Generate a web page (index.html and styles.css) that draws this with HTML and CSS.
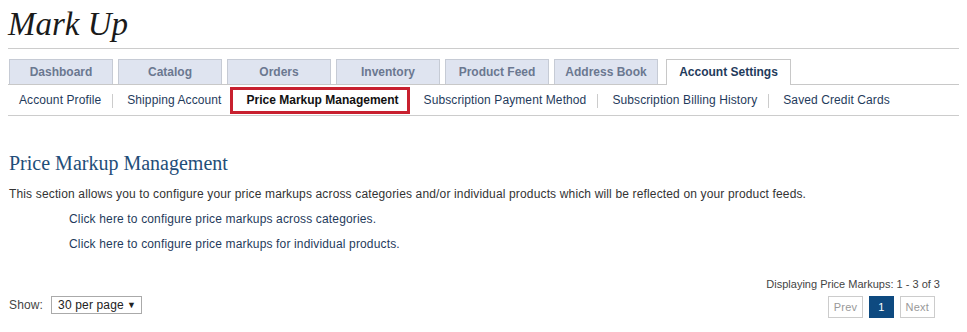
FILE: index.html
```html
<!DOCTYPE html>
<html lang="en">
<head>
  <meta charset="UTF-8">
  <title>Mark Up</title>
  <link rel="stylesheet" href="styles.css">
</head>
<body>

<div class="page">
  <div class="header">
    <h1>Mark Up</h1>
  </div>

  <ul class="tabs">
    <li><a href="#">Dashboard</a></li>
    <li><a href="#">Catalog</a></li>
    <li><a href="#">Orders</a></li>
    <li><a href="#">Inventory</a></li>
    <li><a href="#">Product Feed</a></li>
    <li><a href="#">Address Book</a></li>
    <li class="active"><a href="#">Account Settings</a></li>
  </ul>

  <ul class="subnav">
    <li><a href="#">Account Profile</a></li>
    <li><a href="#">Shipping Account</a></li>
    <li class="active"><a href="#">Price Markup Management</a></li>
    <li><a href="#">Subscription Payment Method</a></li>
    <li><a href="#">Subscription Billing History</a></li>
    <li><a href="#">Saved Credit Cards</a></li>
  </ul>

  <div class="content">
    <h2>Price Markup Management</h2>
    <p class="intro">This section allows you to configure your price markups across categories and/or individual products which will be reflected on your product feeds.</p>
    <ul class="links">
      <li><a href="#">Click here to configure price markups across categories.</a></li>
      <li><a href="#">Click here to configure price markups for individual products.</a></li>
    </ul>
  </div>

  <div class="list-footer">
    <div class="show">
      <span>Show:</span>
      <div class="select">30 per page <span class="arrow">&#9660;</span></div>
    </div>
    <div class="paging">
      <div class="count">Displaying Price Markups: 1 - 3 of 3</div>
      <div class="pager">
        <a href="#" class="disabled">Prev</a>
        <a href="#" class="current">1</a>
        <a href="#" class="disabled">Next</a>
      </div>
    </div>
  </div>
</div>

</body>
</html>
```

FILE: styles.css
```css
* {
  margin: 0;
  padding: 0;
  box-sizing: border-box;
}

body {
  font-family: 'Liberation Sans', Arial, sans-serif;
  font-size: 12px;
  letter-spacing: 0.15px;
  color: #333;
  background: #fff;
}

a {
  text-decoration: none;
}

ul {
  list-style: none;
}

.page {
  padding: 0 8px;
}

.header {
  height: 49px;
  border-bottom: 1px solid #ccc;
}

.header h1 {
  font-family: 'Liberation Serif', 'Times New Roman', serif;
  font-style: italic;
  font-weight: normal;
  font-size: 33px;
  letter-spacing: 0;
  line-height: 40px;
  padding-top: 4px;
  color: #1a1a1a;
}

/* main tabs */
.tabs {
  display: flex;
  gap: 5px;
  margin-top: 10px;
  padding-left: 1px;
  border-bottom: 1px solid #c8c8c8;
}

.tabs li a {
  display: block;
  width: 104px;
  height: 25px;
  line-height: 24px;
  text-align: center;
  font-weight: bold;
  letter-spacing: 0;
  color: #6b7890;
  background: #dfe4f0;
  border: 1px solid #c6cbd5;
  border-bottom: none;
}

.tabs li.active {
  margin-left: 3px;
  margin-bottom: -1px;
}

.tabs li.active a {
  width: 125px;
  height: 26px;
  background: #fff;
  color: #1f3b5c;
  border-color: #c8c8c8;
}

/* sub navigation */
.subnav {
  display: flex;
  align-items: center;
  padding: 2px 0 1px;
  border-bottom: 1px solid #ccc;
  letter-spacing: 0.1px;
}

.subnav li {
  display: flex;
  align-items: center;
}

.subnav li:not(.active) + li:not(.active)::before {
  content: "";
  width: 1px;
  height: 14px;
  background: #ccc;
}

.subnav li a {
  display: block;
  line-height: 21px;
  padding: 3px 11px 3px 14px;
  color: #1f3b5c;
}

.subnav li:first-child a {
  padding-left: 11px;
}

.subnav li.active {
  margin-left: -3px;
}

.subnav li.active a {
  font-weight: bold;
  letter-spacing: 0;
  color: #111;
  border: 3px solid #c8202f;
  padding: 0 8px 0 14px;
}

/* content */
.content {
  padding-left: 1px;
}

.content h2 {
  font-family: 'Liberation Serif', Georgia, serif;
  font-weight: normal;
  font-size: 20px;
  letter-spacing: 0;
  color: #1f4e79;
  margin-top: 35px;
  line-height: 24px;
}

.intro {
  margin-top: 11px;
  line-height: 16px;
}

.links {
  padding-left: 60px;
}

.links li {
  margin-top: 9px;
  line-height: 16px;
}

.links a {
  color: #1f3b5c;
}

/* list footer */
.list-footer {
  display: flex;
  justify-content: space-between;
  align-items: flex-end;
  margin-top: 25px;
  padding-right: 19px;
}

.show {
  display: flex;
  align-items: center;
  gap: 8px;
  padding-left: 1px;
  margin-bottom: 4px;
  color: #444;
}

.select {
  display: flex;
  justify-content: space-between;
  align-items: center;
  width: 91px;
  height: 18px;
  padding: 0 5px 0 6px;
  border: 1px solid #aaa;
  color: #222;
  font-size: 12px;
}

.select .arrow {
  font-size: 9px;
}

.paging {
  display: flex;
  flex-direction: column;
  align-items: flex-end;
}

.count {
  font-size: 11px;
  letter-spacing: 0;
  color: #444;
  line-height: 14px;
}

.pager {
  display: flex;
  gap: 6px;
  margin-top: 5px;
  margin-right: 5px;
}

.pager a {
  display: block;
  height: 22px;
  line-height: 20px;
  padding: 0 5px;
  font-size: 11px;
  letter-spacing: 0.2px;
  border: 1px solid #ccc;
  color: #999;
}

.pager a.current {
  background: #0e4a80;
  border-color: #0e4a80;
  color: #fff;
  padding: 0 8px;
}
```
